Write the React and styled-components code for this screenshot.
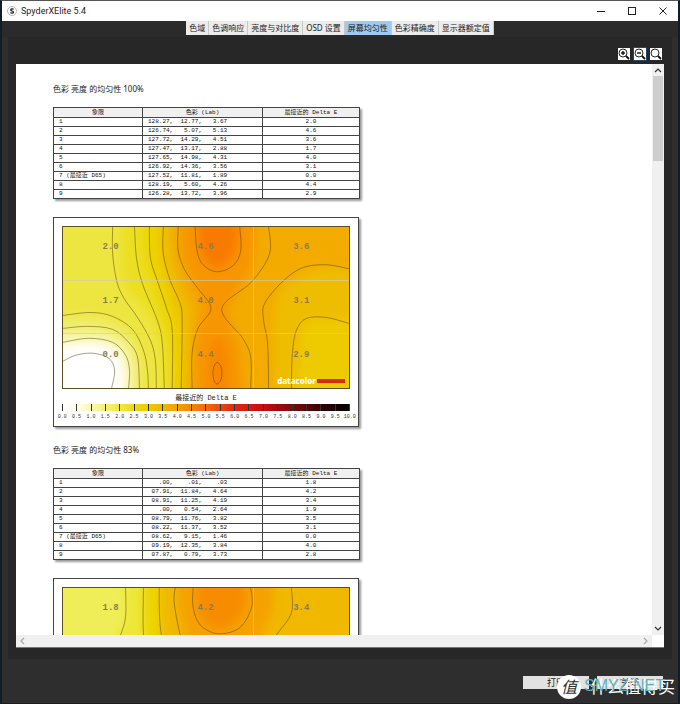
import React from "react";
import styled, { createGlobalStyle } from "styled-components";

const SANS = `"Noto Sans", "Noto Sans CJK SC", sans-serif`;
const MONO = `"Liberation Mono", "Noto Sans CJK SC", monospace`;

const tabs = [
  "色域",
  "色调响应",
  "亮度与对比度",
  "OSD 设置",
  "屏幕均匀性",
  "色彩精确度",
  "显示器额定值",
];
const activeTab = "屏幕均匀性";

const reports = [
  {
    level: "100%",
    rows: [
      ["128.27", "12.77", "3.67", "2.0"],
      ["126.74", "5.07", "5.13", "4.6"],
      ["127.72", "14.29", "4.51", "3.6"],
      ["127.47", "13.17", "2.88", "1.7"],
      ["127.65", "14.98", "4.31", "4.0"],
      ["126.92", "14.36", "3.56", "3.1"],
      ["127.52", "11.81", "1.89", "0.0"],
      ["128.19", "5.60", "4.26", "4.4"],
      ["126.28", "13.72", "3.96", "2.9"],
    ],
    background: "#eee640",
    fills: [
      { color: "#ecdf24", points: [[60, -20], [60, 54], [80, 80], [97, 114], [101, 182]], close: "L320 182 L320 -20 Z" },
      { color: "#ecd400", points: [[80, -20], [82, 31], [96, 80], [106, 117], [108, 182]], close: "L320 182 L320 -20 Z" },
      { color: "#efbf00", points: [[96, -20], [98, 31], [108, 70], [116, 104], [116, 182]], close: "L320 182 L320 -20 Z" },
      { color: "#f3ab00", points: [[108, -20], [109, 27], [118, 60], [128, 90], [125, 182]], close: "L320 182 L320 -20 Z" },
      { color: "#f79600", points: [[118, -20], [120, 30], [140, 80], [132, 112], [132, 182]], close: "L184 182 L178 120 L165 82 L192 40 L196 -20 Z" },
      { color: "#f97a00", points: [[134, -20], [138, 24], [155, 42], [174, 24], [177, -20]], close: "Z" },
      { color: "#f88600", points: [[146, 182], [147, 130], [156, 110], [166, 130], [166, 182]], close: "Z" },
      { color: "#efbd00", points: [[320, 46], [265, 42], [235, 52], [214, 80], [214, 182]], close: "L320 182 Z" },
      { color: "#eecb00", points: [[320, 96], [265, 94], [242, 104], [236, 182]], close: "L320 182 Z" },
      { color: "#f0ed6a", points: [[-20, 94], [28, 91], [62, 104], [76, 130], [78, 182]], close: "L-20 182 Z" },
      { color: "#f8f6a8", points: [[-20, 108], [28, 106], [56, 114], [70, 136], [70, 182]], close: "L-20 182 Z" },
      { color: "#ffffff", points: [[-20, 120], [28, 117], [52, 124], [61, 144], [60, 182]], close: "L-20 182 Z" },
    ],
    contours: [
      [[50, 0], [50, 27], [54, 54], [61, 71], [75, 91], [88, 114], [93, 134], [94, 162]],
      [[72, 0], [74, 31], [80, 57], [95, 94], [100, 117], [102, 162]],
      [[87, 0], [88, 31], [95, 54], [104, 81], [110, 104], [110, 162]],
      [[101, 0], [101, 27], [108, 54], [118, 77], [120, 97], [119, 162]],
      [[116, 0], [116, 24], [123, 44], [136, 62], [149, 82], [136, 102], [130, 127], [130, 162]],
      [[207, 0], [208, 27], [190, 55], [160, 82], [181, 112], [189, 131], [189, 162]],
      [[133, 0], [135, 24], [141, 38], [155, 45], [171, 39], [179, 24], [178, 0]],
      [[155, 136], [159, 140], [160, 147], [159, 154], [155, 158], [152, 154], [151, 147], [152, 140], [155, 136]],
      [[288, 42], [265, 38], [241, 41], [221, 55], [203, 77], [202, 94], [206, 117], [207, 162]],
      [[288, 97], [265, 91], [245, 92], [235, 104], [231, 127], [230, 162]],
      [[0, 89], [28, 86], [50, 90], [70, 103], [81, 124], [85, 144], [86, 162]],
      [[0, 102], [25, 100], [50, 103], [66, 116], [75, 131], [77, 162]],
      [[0, 116], [26, 112], [50, 116], [63, 129], [67, 144], [66, 162]],
      [[0, 135], [13, 129], [30, 127], [46, 132], [52, 144], [49, 162]],
    ],
  },
  {
    level: "83%",
    rows: [
      [".00", ".01", ".03", "1.8"],
      ["07.91", "11.84", "4.64", "4.2"],
      ["08.91", "11.25", "4.19", "3.4"],
      [".00", "0.54", "2.64", "1.9"],
      ["08.79", "11.76", "3.82", "3.5"],
      ["08.22", "11.37", "3.52", "3.1"],
      ["08.62", "9.15", "1.46", "0.0"],
      ["09.19", "12.35", "3.84", "4.0"],
      ["07.87", "0.79", "3.73", "2.8"],
    ],
    background: "#f0ee58",
    fills: [
      { color: "#ede838", points: [[58, -20], [62, 29], [50, 60], [50, 182]], close: "L320 182 L320 -20 Z" },
      { color: "#ecd600", points: [[80, -20], [80, 40], [84, 182]], close: "L320 182 L320 -20 Z" },
      { color: "#f1b800", points: [[98, -20], [98, 40], [110, 182]], close: "L320 182 L320 -20 Z" },
      { color: "#f5a200", points: [[116, -20], [116, 20], [124, 60], [130, 182]], close: "L180 182 L200 50 L212 20 L212 -20 Z" },
      { color: "#f78c00", points: [[134, -20], [136, 24], [157, 42], [182, 24], [184, -20]], close: "Z" },
    ],
    contours: [
      [[63, 0], [63, 29], [58, 47], [48, 70]],
      [[81, 0], [81, 47], [86, 90], [90, 162]],
      [[97, 0], [97, 20], [99, 47], [108, 90], [112, 162]],
      [[113, 0], [112, 15], [118, 47], [130, 90], [130, 162]],
      [[131, 0], [131, 19], [138, 37], [156, 46], [178, 40], [190, 19], [189, 0]],
      [[230, 0], [230, 25], [215, 47], [190, 80], [196, 162]],
    ],
  },
];

const scale = Array.from({ length: 21 }, (_, i) => (i / 2).toFixed(1));

// Catmull-Rom spline through the points, written as cubic beziers
const spline = (points) => {
  let d = `M${points[0][0]} ${points[0][1]}`;
  for (let i = 0; i < points.length - 1; i++) {
    const p0 = points[i - 1] || points[i];
    const p1 = points[i];
    const p2 = points[i + 1];
    const p3 = points[i + 2] || p2;
    d += ` C${p1[0] + (p2[0] - p0[0]) / 6} ${p1[1] + (p2[1] - p0[1]) / 6}`;
    d += ` ${p2[0] - (p3[0] - p1[0]) / 6} ${p2[1] - (p3[1] - p1[1]) / 6}`;
    d += ` ${p2[0]} ${p2[1]}`;
  }
  return d;
};

const formatLab = ([l, a, b]) =>
  `${l.padStart(6)},${a.padStart(7)},${b.padStart(7)}`;

const ResultTable = ({ rows }) => (
  <Table>
    <colgroup>
      <col width="89" />
      <col width="120" />
      <col width="97" />
    </colgroup>
    <thead>
      <tr>
        <HeadCell>象限</HeadCell>
        <HeadCell>色彩 (Lab)</HeadCell>
        <HeadCell>最接近的 Delta E</HeadCell>
      </tr>
    </thead>
    <tbody>
      {rows.map((row, index) => (
        <tr key={index}>
          <Cell>{index === 6 ? "7 (最接近 D65)" : index + 1}</Cell>
          <Cell>{formatLab(row)}</Cell>
          <Cell $center>{row[3]}</Cell>
        </tr>
      ))}
    </tbody>
  </Table>
);

const UniformityMap = ({ report }) => {
  const blurId = `blur-${parseInt(report.level)}`;
  return (
    <ChartCard>
      <MapArea>
        <MapSvg viewBox="0 0 288 162" preserveAspectRatio="none">
          <defs>
            <filter id={blurId} x="-10%" y="-10%" width="120%" height="120%">
              <feGaussianBlur stdDeviation="5" />
            </filter>
          </defs>
          <rect width="288" height="162" fill={report.background} />
          <g filter={`url(#${blurId})`}>
            <rect x="-30" y="-30" width="348" height="222" fill={report.background} />
            {report.fills.map((fill, i) => (
              <path key={i} d={`${spline(fill.points)} ${fill.close}`} fill={fill.color} />
            ))}
          </g>
          <g fill="none" stroke="#5c4608" strokeOpacity="0.65" strokeWidth="0.8">
            {report.contours.map((points, i) => (
              <path key={i} d={spline(points)} />
            ))}
          </g>
        </MapSvg>
        <ZoneGrid>
          {report.rows.map((row, i) => (
            <Zone key={i} $line={i % 3 === 1}>
              {row[3]}
            </Zone>
          ))}
        </ZoneGrid>
        <Brand>
          datacolor
          <BrandBar />
        </Brand>
      </MapArea>
      <ScaleTitle>最接近的 Delta E</ScaleTitle>
      <ScaleBar>
        {scale.slice(1).map((value) => (
          <ScaleStep key={value} />
        ))}
      </ScaleBar>
      <ScaleLabels>
        {scale.map((value) => (
          <span key={value}>{value}</span>
        ))}
      </ScaleLabels>
    </ChartCard>
  );
};

const Magnifier = ({ sign }) => (
  <svg width="12" height="12" viewBox="0 0 12 12" fill="none" stroke="#111">
    <circle cx="5" cy="5" r="4" strokeWidth="0.9" />
    <path d="M8 8 L11 11" strokeWidth="1.8" />
    {sign && <path d="M3 5 H7" strokeWidth="1.4" />}
    {sign === "+" && <path d="M5 3 V7" strokeWidth="1.4" />}
  </svg>
);

const Arrow = ({ d, color = "#333" }) => (
  <svg width="8" height="8" viewBox="0 0 8 8" fill="none" stroke={color} strokeWidth="1.2">
    <path d={d} />
  </svg>
);

const App = () => {
  return (
    <>
      <GlobalStyle />
      <Window>
        <TitleBar>
          <svg width="10" height="10" viewBox="0 0 10 10">
            <circle cx="5" cy="5" r="4.5" fill="#fff" stroke="#999" strokeWidth="0.7" />
            <path
              d="M6.6 3.4 C6 2.6 3.7 2.6 3.7 3.9 C3.7 5.2 6.5 4.7 6.5 6.1 C6.5 7.5 4 7.4 3.4 6.5"
              fill="none"
              stroke="#111"
              strokeWidth="1.2"
            />
          </svg>
          <AppName>SpyderXElite 5.4</AppName>
          <CaptionButton aria-label="最小化">
            <svg width="8" height="8" viewBox="0 0 8 8" stroke="#222">
              <path d="M0 4.5 H8" />
            </svg>
          </CaptionButton>
          <CaptionButton aria-label="最大化">
            <svg width="8" height="8" viewBox="0 0 8 8" stroke="#222" fill="none">
              <rect x="0.5" y="0.5" width="7" height="7" />
            </svg>
          </CaptionButton>
          <CaptionButton aria-label="关闭">
            <svg width="8" height="8" viewBox="0 0 8 8" stroke="#222">
              <path d="M0.5 0.5 L7.5 7.5 M7.5 0.5 L0.5 7.5" />
            </svg>
          </CaptionButton>
        </TitleBar>
        <TabBar>
          {tabs.map((tab) => (
            <Tab key={tab} $active={tab === activeTab}>
              {tab}
            </Tab>
          ))}
        </TabBar>
        <Panel>
          <ZoomTools>
            <ZoomButton aria-label="放大">
              <Magnifier sign="+" />
            </ZoomButton>
            <ZoomButton aria-label="缩小" $focused>
              <Magnifier sign="-" />
            </ZoomButton>
            <ZoomButton aria-label="重置">
              <Magnifier />
            </ZoomButton>
          </ZoomTools>
          <Viewer>
            <Document>
              {reports.map((report) => (
                <Report key={report.level}>
                  <ReportTitle>色彩 亮度 的均匀性 {report.level}</ReportTitle>
                  <ResultTable rows={report.rows} />
                  <UniformityMap report={report} />
                </Report>
              ))}
            </Document>
            <VerticalScroll>
              <ScrollButton aria-label="向上">
                <Arrow d="M1 6 L4 3 L7 6" />
              </ScrollButton>
              <ScrollThumb />
              <ScrollButton aria-label="向下">
                <Arrow d="M1 2 L4 5 L7 2" />
              </ScrollButton>
            </VerticalScroll>
            <HorizontalScroll>
              <ScrollButton aria-label="向左">
                <Arrow d="M6 1 L3 4 L6 7" color="#aaa" />
              </ScrollButton>
              <ScrollButton aria-label="向右">
                <Arrow d="M2 1 L5 4 L2 7" color="#aaa" />
              </ScrollButton>
            </HorizontalScroll>
          </Viewer>
        </Panel>
        <Footer>
          <FooterButton>打印</FooterButton>
          <FooterButton>关闭</FooterButton>
          <Watermark>
            <WatermarkBadge>值</WatermarkBadge>
            <WatermarkText>什么值得买</WatermarkText>
          </Watermark>
          <SiteMark>SMYZ.NET</SiteMark>
        </Footer>
      </Window>
    </>
  );
};

const GlobalStyle = createGlobalStyle`
  * {
    box-sizing: border-box;
  }
  body {
    margin: 0;
    font-family: ${SANS};
  }
  button {
    margin: 0;
    padding: 0;
    border: none;
    font-family: inherit;
    color: #222;
  }
  svg {
    display: block;
  }
`;

const Window = styled.div`
  display: flex;
  flex-direction: column;
  height: 100vh;
  border: 1px solid #555;
  border-left: 2px solid #101c28;
  border-right: 2px solid #101c28;
  border-bottom-color: #1c1c1c;
  background: #2e2e2e;
`;

const TitleBar = styled.header`
  display: flex;
  flex: none;
  align-items: center;
  height: 20px;
  padding-left: 5px;
  background: #fff;
`;

const AppName = styled.h1`
  flex: 1;
  margin: 0;
  padding-left: 4px;
  color: #222;
  font-family: Roboto, sans-serif;
  font-size: 9px;
  font-weight: 400;
`;

const CaptionButton = styled.button`
  display: flex;
  align-items: center;
  justify-content: center;
  width: 31px;
  height: 20px;
  background: transparent;
`;

const TabBar = styled.nav`
  display: flex;
  flex: none;
  justify-content: center;
  height: 16px;
  background: #2b2b2b;
`;

const Tab = styled.button`
  height: 14px;
  padding: 0 3px;
  border-right: 1px solid #c8c8c8;
  background: ${(props) => (props.$active ? "#9fc8f2" : "#ececec")};
  font-size: 8px;
  line-height: 14px;
`;

const Panel = styled.main`
  display: flex;
  flex: 1;
  flex-direction: column;
  min-height: 0;
  margin: 0 6px;
  padding: 11px 8px 11px;
  background: #272727;
`;

const ZoomTools = styled.div`
  display: flex;
  flex: none;
  justify-content: flex-end;
  gap: 4px;
  height: 16px;
  padding-right: 2px;
`;

const ZoomButton = styled.button`
  display: flex;
  align-items: center;
  justify-content: center;
  width: 12px;
  height: 12px;
  background: #fff;
  outline: ${(props) => (props.$focused ? "1px solid #1f4a70" : "none")};
`;

const Viewer = styled.section`
  display: grid;
  flex: 1;
  grid-template-columns: minmax(0, 1fr) 12px;
  grid-template-rows: minmax(0, 1fr) 12px;
  min-height: 0;
  border-bottom: 1px solid #777;
  background: #fff;
`;

const Document = styled.div`
  overflow: hidden;
  padding: 16px 37px 0;
`;

const Report = styled.article`
  width: 306px;
  margin-bottom: 14px;
`;

const ReportTitle = styled.h2`
  margin: 0 0 9px;
  color: #222;
  font-size: 8px;
  font-weight: 400;
  line-height: 18px;
`;

const Table = styled.table`
  width: 100%;
  table-layout: fixed;
  border-collapse: collapse;
  box-shadow: 2px 2px 2px #999;
  color: #111;
  font-family: ${MONO};
  font-size: 6px;
  line-height: 8px;
`;

const HeadCell = styled.th`
  height: 10px;
  padding: 0;
  border: 1px solid #444;
  background: #f0f0f0;
  font-weight: 400;
`;

const Cell = styled.td`
  height: 9px;
  padding: 0 0 0 ${(props) => (props.$center ? 0 : 5)}px;
  border: 1px solid #444;
  background: #fff;
  text-align: ${(props) => (props.$center ? "center" : "left")};
  white-space: pre;
`;

const ChartCard = styled.figure`
  margin: 18px 0 0;
  padding: 8px 8px 5px;
  border: 1px solid #444;
  background: #fff;
  box-shadow: 2px 2px 2px #999;
  font-family: ${MONO};
`;

const MapArea = styled.div`
  position: relative;
  height: 163px;
  border: 1px solid #5c5020;
`;

const MapSvg = styled.svg`
  width: 100%;
  height: 100%;
`;

const ZoneGrid = styled.div`
  position: absolute;
  inset: 0;
  display: grid;
  grid-template-columns: repeat(3, 1fr);
  grid-template-rows: repeat(3, 1fr);
`;

const Zone = styled.div`
  display: flex;
  align-items: center;
  justify-content: center;
  padding-bottom: 12px;
  border-bottom: 1px solid rgba(210, 205, 180, 0.6);
  border-right: ${(props) =>
    props.$line ? "1px solid rgba(210, 205, 180, 0.6)" : "none"};
  color: #8a7e50;
  font-size: 9px;
  font-weight: 700;

  &:nth-child(n + 7) {
    border-bottom-color: transparent;
  }
`;

const Brand = styled.div`
  position: absolute;
  right: 4px;
  bottom: 2px;
  display: flex;
  align-items: center;
  gap: 1px;
  color: #fff;
  font-family: ${SANS};
  font-size: 8px;
  font-weight: 800;
  line-height: 10px;
`;

const BrandBar = styled.span`
  width: 28px;
  height: 4px;
  background: #dc2a10;
`;

const ScaleTitle = styled.figcaption`
  margin-top: 3px;
  color: #222;
  font-size: 7px;
  line-height: 12px;
  text-align: center;
`;

const ScaleBar = styled.div`
  display: flex;
  height: 7px;
  border-left: 1px solid #333;
  background: linear-gradient(
    90deg,
    #fff 0%,
    #fffde0 6%,
    #f0ec50 18%,
    #ecd000 28%,
    #f3a000 40%,
    #f06a10 50%,
    #dc2810 60%,
    #c01010 70%,
    #700808 82%,
    #180000 94%,
    #000 100%
  );
`;

const ScaleStep = styled.span`
  flex: 1;
  border-right: 1px solid #333;
`;

const ScaleLabels = styled.div`
  display: flex;
  margin: 2px -7px 0;
  color: #333;
  font-size: 5px;
  line-height: 8px;

  span {
    flex: 1;
    text-align: center;
  }
`;

const VerticalScroll = styled.div`
  display: flex;
  flex-direction: column;
  align-items: center;
  background: #f0f0f0;
`;

const HorizontalScroll = styled.div`
  display: flex;
  align-items: center;
  justify-content: space-between;
  background: #f0f0f0;
`;

const ScrollButton = styled.button`
  display: flex;
  align-items: center;
  justify-content: center;
  width: 12px;
  height: 12px;
  background: transparent;
`;

const ScrollThumb = styled.div`
  width: 10px;
  height: 85px;
  margin-bottom: auto;
  background: #cdcdcd;
`;

const Footer = styled.footer`
  position: relative;
  display: flex;
  flex: none;
  justify-content: flex-end;
  gap: 8px;
  height: 44px;
  padding: 17px 15px 0;
`;

const FooterButton = styled.button`
  width: 66px;
  height: 13px;
  background: #e2e2e2;
  font-size: 9px;
  line-height: 13px;
`;

const Watermark = styled.div`
  position: absolute;
  right: 3px;
  bottom: 4px;
  display: flex;
  align-items: center;
  gap: 9px;
`;

const WatermarkBadge = styled.span`
  width: 24px;
  height: 24px;
  border-radius: 50%;
  background: #fff;
  color: #333;
  font-size: 16px;
  font-style: italic;
  line-height: 24px;
  text-align: center;
`;

const WatermarkText = styled.span`
  color: #fff;
  font-size: 17px;
  line-height: 24px;
`;

const SiteMark = styled.span`
  position: absolute;
  right: 13px;
  bottom: 7px;
  color: #5fb0bc;
  font-family: "Liberation Sans", sans-serif;
  font-size: 16px;
  line-height: 20px;
`;

export default App;
